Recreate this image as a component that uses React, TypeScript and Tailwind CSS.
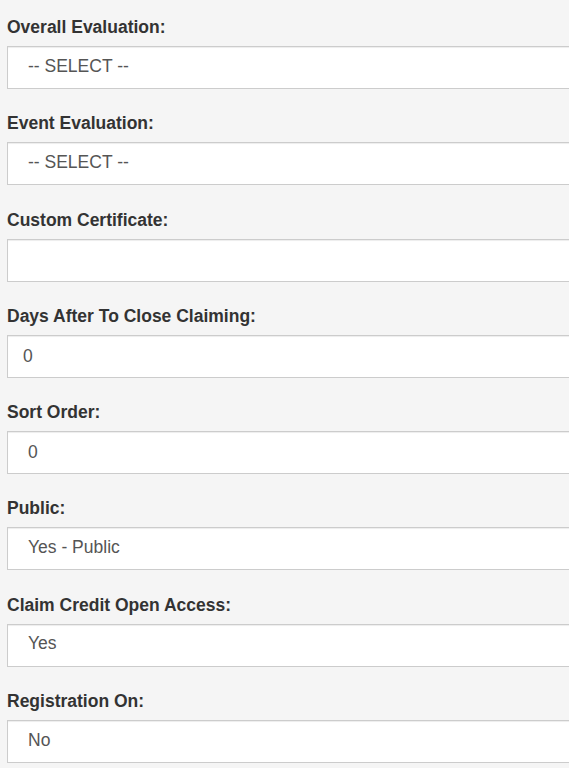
import React from "react";

type Field = { label: string; value: string; kind: "select" | "input" | "inputWide" };

const fields: Field[] = [
  { label: "Overall Evaluation:", value: "-- SELECT --", kind: "select" },
  { label: "Event Evaluation:", value: "-- SELECT --", kind: "select" },
  { label: "Custom Certificate:", value: "", kind: "select" },
  { label: "Days After To Close Claiming:", value: "0", kind: "input" },
  { label: "Sort Order:", value: "0", kind: "inputWide" },
  { label: "Public:", value: "Yes - Public", kind: "select" },
  { label: "Claim Credit Open Access:", value: "Yes", kind: "select" },
  { label: "Registration On:", value: "No", kind: "select" },
];

export default function App() {
  return (
    <div
      className="w-[569px] h-[768px] overflow-hidden bg-[#f5f5f5] pl-[7px] pt-[15px]"
      style={{ fontFamily: '"Liberation Sans", Arial, sans-serif' }}
    >
      {fields.map((f, i) => (
        <div key={i} className="mb-[22.3px]">
          <div className="h-[25px] leading-[25px] text-[17.5px] font-bold text-[#333] mb-[6px]">
            {f.label}
          </div>
          <div className="w-[620px] h-[43px] bg-white border border-[#ccc] shadow-[inset_0_1px_1px_rgba(0,0,0,0.075)] flex items-center">
            <span
              className={
                "text-[17.5px] leading-[25px] text-[#555] " +
                (f.kind === "input" ? "pl-[15px]" : f.kind === "inputWide" ? "pl-[20px]" : "pl-[20px] pb-[3px]")
              }
            >
              {f.value}
            </span>
          </div>
        </div>
      ))}
    </div>
  );
}
